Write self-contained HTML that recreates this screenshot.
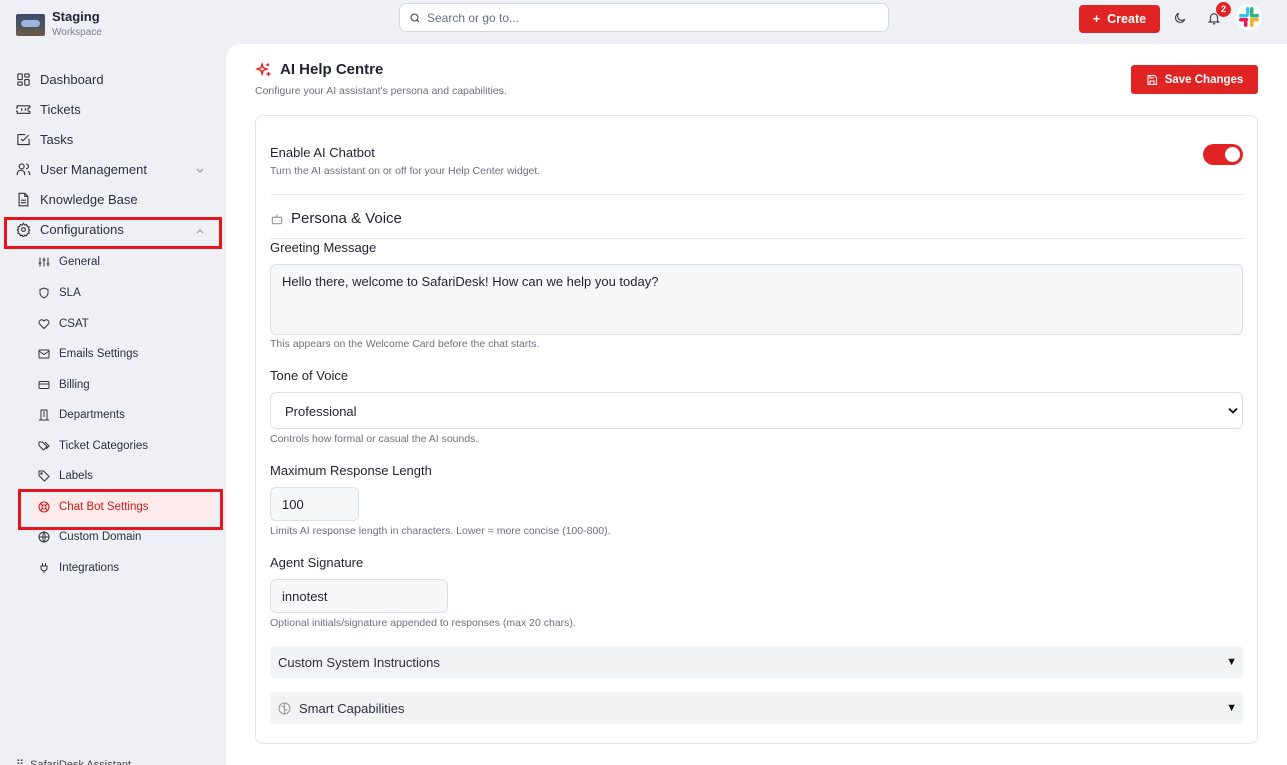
<!DOCTYPE html>
<html><head><meta charset="utf-8"><style>
*{box-sizing:border-box;margin:0;padding:0}
html,body{width:1287px;height:765px;overflow:hidden}
body{background:#eef0f6;font-family:"Liberation Sans",sans-serif;color:#1f2333;position:relative}
.abs{position:absolute}
svg{display:block}
.nav{position:absolute;left:16px;display:flex;align-items:center;font-size:13px;color:#2b3040}
.nav svg{margin-right:9px}
.sub{position:absolute;left:38px;display:flex;align-items:center;font-size:11.5px;color:#2b3040}
.sub svg{margin-right:9px}
.main{position:absolute;left:226px;top:44px;width:1061px;height:721px;background:#fff;border-top-left-radius:14px}
.card{position:absolute;left:255px;top:115px;width:1003px;height:629px;border:1px solid #e3e5ea;border-radius:8px;background:#fff}
.lbl{position:absolute;left:270px;font-size:13px;color:#1f2333}
.help{position:absolute;left:270px;font-size:10.5px;color:#6b7180}
.inp{position:absolute;left:270px;border:1px solid #dcdfe5;border-radius:6px;background:#f7f8fa;font-size:13px;color:#1f2333;padding-left:11px}
.acc{position:absolute;left:270px;width:973px;height:32px;background:#f2f3f5;border-radius:4px;font-size:13px;color:#2b3040;display:flex;align-items:center;padding-left:8px}
.acc .tri{position:absolute;right:6px;top:10px;font-size:11px;color:#111}
</style></head><body>
<div class="abs" style="left:16px;top:14px;width:29px;height:22px;background:linear-gradient(#3a4a6a,#6b5a4a);border-radius:2px"><div style="margin:6px 5px;width:19px;height:7px;background:#9bb5e0;border-radius:4px"></div></div>
<div class="abs" style="left:52px;top:9px;font-size:13px;font-weight:bold">Staging</div>
<div class="abs" style="left:52px;top:27px;font-size:10px;color:#7a7f8c">Workspace</div>
<div class="abs" style="left:399px;top:3px;width:490px;height:29px;background:#fff;border:1px solid #d5d8df;border-radius:7px;font-size:12px;color:#6b7180;padding:7px 0 0 27px">Search or go to...
<svg class="abs" style="left:9px;top:8px" width="12" height="12" viewBox="0 0 24 24" fill="none" stroke="#444" stroke-width="2.2"><circle cx="11" cy="11" r="7"/><path d="M20 20l-4-4"/></svg></div>
<div class="abs" style="left:1079px;top:5px;width:81px;height:28px;background:#e02424;border-radius:4px;color:#fff;font-size:12.5px;font-weight:bold;display:flex;align-items:center;justify-content:center">+&nbsp; Create</div>
<svg class="abs" style="left:1173px;top:11px" width="14" height="14" viewBox="0 0 24 24" fill="none" stroke="#444" stroke-width="2"><path d="M20 14A8 8 0 1 1 10 4a6 6 0 0 0 10 10z"/></svg>
<svg class="abs" style="left:1207px;top:11px" width="14" height="15" viewBox="0 0 24 24" fill="none" stroke="#444" stroke-width="2"><path d="M6 16V10a6 6 0 0 1 12 0v6l2 2H4z M10 21h4"/></svg>
<div class="abs" style="left:1216px;top:2px;width:15px;height:15px;background:#e02424;border-radius:50%;color:#fff;font-size:9px;font-weight:bold;text-align:center;line-height:15px">2</div>
<svg class="abs" style="left:1236px;top:4px" width="26" height="26" viewBox="0 0 26 26"><circle cx="13" cy="13" r="13" fill="#fff"/><rect x="10" y="3" width="3.5" height="9" rx="1.7" fill="#36c5f0"/><rect x="3" y="10" width="9" height="3.5" rx="1.7" fill="#36c5f0"/><rect x="14" y="3" width="3.5" height="9" rx="1.7" fill="#2eb67d"/><rect x="14" y="10" width="9" height="3.5" rx="1.7" fill="#2eb67d"/><rect x="3" y="14" width="9" height="3.5" rx="1.7" fill="#e01e5a"/><rect x="8" y="14" width="3.5" height="9" rx="1.7" fill="#e01e5a"/><rect x="14" y="14" width="9" height="3.5" rx="1.7" fill="#ecb22e"/><rect x="14" y="14" width="3.5" height="9" rx="1.7" fill="#ecb22e"/></svg>

<div class="nav" style="top:72px"><svg width="15" height="15" viewBox="0 0 24 24" fill="none" stroke="#333" stroke-width="1.8"><rect x="3" y="3" width="7" height="9" rx="1"/><rect x="14" y="3" width="7" height="5" rx="1"/><rect x="14" y="12" width="7" height="9" rx="1"/><rect x="3" y="16" width="7" height="5" rx="1"/></svg>Dashboard</div>
<div class="nav" style="top:102px"><svg width="15" height="15" viewBox="0 0 24 24" fill="none" stroke="#333" stroke-width="1.8"><path d="M2 9a3 3 0 0 0 0 6v3h20v-3a3 3 0 0 1 0-6V6H2z M9 10v4 M15 10v4"/></svg>Tickets</div>
<div class="nav" style="top:132px"><svg width="15" height="15" viewBox="0 0 24 24" fill="none" stroke="#333" stroke-width="1.8"><path d="M21 11v9H3V4h12 M8 11l3 3 9-9"/></svg>Tasks</div>
<div class="nav" style="top:162px"><svg width="15" height="15" viewBox="0 0 24 24" fill="none" stroke="#333" stroke-width="1.8"><circle cx="9" cy="7" r="4"/><path d="M2 21v-2a6 6 0 0 1 12 0v2 M16 3a4 4 0 0 1 0 8 M22 21v-2a5 5 0 0 0-3-4"/></svg>User Management</div>
<svg class="abs" style="left:195px;top:167px" width="10" height="8" viewBox="0 0 10 8" fill="none" stroke="#999" stroke-width="1.2"><path d="M2 2l3 3 3-3"/></svg>
<div class="nav" style="top:192px"><svg width="15" height="15" viewBox="0 0 24 24" fill="none" stroke="#333" stroke-width="1.8"><path d="M14 2H5v20h14V7z M14 2v5h5 M8 13h8 M8 17h8"/></svg>Knowledge Base</div>
<div class="abs" style="left:4px;top:217px;width:218px;height:32px;border:3px solid #e8141b"></div>
<div class="nav" style="top:222px"><svg width="15" height="15" viewBox="0 0 24 24" fill="none" stroke="#333" stroke-width="1.8"><circle cx="12" cy="12" r="3"/><path d="M12 2l2 3 3-1 1 3 3 1-1 3 2 2-2 2 1 3-3 1-1 3-3-1-2 3-2-3-3 1-1-3-3-1 1-3-2-2 2-2-1-3 3-1 1-3 3 1z"/></svg>Configurations</div>
<svg class="abs" style="left:195px;top:227px" width="10" height="8" viewBox="0 0 10 8" fill="none" stroke="#999" stroke-width="1.2"><path d="M2 6l3-3 3 3"/></svg>
<div class="sub" style="top:256px"><svg width="12" height="12" viewBox="0 0 24 24" fill="none" stroke="#333" stroke-width="2"><path d="M4 3v18 M12 3v18 M20 3v18 M1 14h6 M9 8h6 M17 16h6"/></svg>General</div>
<div class="sub" style="top:287px"><svg width="12" height="12" viewBox="0 0 24 24" fill="none" stroke="#333" stroke-width="2"><path d="M12 2l8 3v7c0 5-4 8-8 10-4-2-8-5-8-10V5z"/></svg>SLA</div>
<div class="sub" style="top:318px"><svg width="12" height="12" viewBox="0 0 24 24" fill="none" stroke="#333" stroke-width="2"><path d="M12 21l-9-9a5 5 0 0 1 9-6 5 5 0 0 1 9 6z"/></svg>CSAT</div>
<div class="sub" style="top:348px"><svg width="12" height="12" viewBox="0 0 24 24" fill="none" stroke="#333" stroke-width="2"><rect x="2" y="4" width="20" height="16" rx="2"/><path d="M2 6l10 7 10-7"/></svg>Emails Settings</div>
<div class="sub" style="top:379px"><svg width="12" height="12" viewBox="0 0 24 24" fill="none" stroke="#333" stroke-width="2"><rect x="2" y="5" width="20" height="14" rx="2"/><path d="M2 10h20"/></svg>Billing</div>
<div class="sub" style="top:409px"><svg width="12" height="12" viewBox="0 0 24 24" fill="none" stroke="#333" stroke-width="2"><path d="M6 22V2h12v20 M2 22h20 M10 6h4 M10 10h4 M10 14h4"/></svg>Departments</div>
<div class="sub" style="top:440px"><svg width="12" height="12" viewBox="0 0 24 24" fill="none" stroke="#333" stroke-width="2"><path d="M2 4v7l9 9 7-7-9-9z M14 4l8 8-6 6"/></svg>Ticket Categories</div>
<div class="sub" style="top:470px"><svg width="12" height="12" viewBox="0 0 24 24" fill="none" stroke="#333" stroke-width="2"><path d="M2 2v9l11 11 9-9L11 2z"/><circle cx="7" cy="7" r="1.5"/></svg>Labels</div>
<div class="abs" style="left:18px;top:489px;width:205px;height:41px;border:3px solid #e8141b"></div>
<div class="abs" style="left:30px;top:494px;width:185px;height:26px;background:#fdeaea;border-radius:6px"></div>
<div class="sub" style="top:501px;color:#c81e1e"><svg width="12" height="12" viewBox="0 0 24 24" fill="none" stroke="#c81e1e" stroke-width="2.2"><circle cx="12" cy="12" r="10"/><circle cx="12" cy="12" r="4"/><path d="M5 5l4 4 M15 15l4 4 M19 5l-4 4 M9 15l-4 4"/></svg>Chat Bot Settings</div>
<div class="sub" style="top:531px"><svg width="12" height="12" viewBox="0 0 24 24" fill="none" stroke="#333" stroke-width="2"><circle cx="12" cy="12" r="10"/><path d="M2 12h20 M12 2c3 3 3 17 0 20 M12 2c-3 3-3 17 0 20"/></svg>Custom Domain</div>
<div class="sub" style="top:562px"><svg width="12" height="12" viewBox="0 0 24 24" fill="none" stroke="#333" stroke-width="2"><path d="M9 2v6 M15 2v6 M6 8h12v4a6 6 0 0 1-12 0z M12 18v4"/></svg>Integrations</div>
<div class="abs" style="left:16px;top:758px;font-size:11px;color:#444">⠿&nbsp; SafariDesk Assistant</div>

<div class="main"></div>
<svg class="abs" style="left:255px;top:62px" width="17" height="17" viewBox="0 0 24 24" fill="none" stroke="#e02424" stroke-width="2"><path d="M10 3l1.5 5L17 10l-5.5 2L10 17l-1.5-5L3 10l5.5-2z M19 14v6 M16 17h6 M18 2v4 M16 4h4"/></svg>
<div class="abs" style="left:280px;top:61px;font-size:15px;font-weight:bold">AI Help Centre</div>
<div class="abs" style="left:255px;top:85px;font-size:10.5px;color:#6b7180">Configure your AI assistant's persona and capabilities.</div>
<div class="abs" style="left:1131px;top:65px;width:127px;height:29px;background:#e02424;border-radius:3px;color:#fff;font-size:11.5px;font-weight:bold;display:flex;align-items:center;justify-content:center"><svg width="12" height="12" viewBox="0 0 24 24" fill="none" stroke="#fff" stroke-width="2.2" style="margin-right:7px"><path d="M4 3h13l4 4v14H4z M8 3v5h8 M8 21v-7h8v7"/></svg>Save Changes</div>

<div class="card"></div>
<div class="abs" style="left:270px;top:145px;font-size:13px">Enable AI Chatbot</div>
<div class="abs" style="left:270px;top:165px;font-size:10.5px;color:#6b7180">Turn the AI assistant on or off for your Help Center widget.</div>
<div class="abs" style="left:1203px;top:144px;width:40px;height:21px;background:#e02424;border-radius:11px"><div style="position:absolute;right:3px;top:3px;width:15px;height:15px;background:#fff;border-radius:50%"></div></div>
<div class="abs" style="left:270px;top:194px;width:973px;height:1px;background:#e5e7eb"></div>
<svg class="abs" style="left:270px;top:212px" width="14" height="14" viewBox="0 0 24 24" fill="none" stroke="#999" stroke-width="2"><rect x="4" y="9" width="16" height="11" rx="2"/><path d="M12 4v5 M9 14v1 M15 14v1"/></svg>
<div class="abs" style="left:291px;top:210px;font-size:15px">Persona &amp; Voice</div>
<div class="abs" style="left:270px;top:238px;width:973px;height:1px;background:#e5e7eb"></div>
<div class="lbl" style="top:240px">Greeting Message</div>
<div class="inp" style="top:264px;width:973px;height:71px;padding-top:9px">Hello there, welcome to SafariDesk! How can we help you today?</div>
<div class="help" style="top:338px">This appears on the Welcome Card before the chat starts.</div>
<div class="lbl" style="top:368px">Tone of Voice</div>
<div class="inp" style="top:392px;width:973px;height:37px;background:#fff;padding:11px 0 0 14px">Professional<svg class="abs" style="right:4px;top:13px" width="10" height="9" viewBox="0 0 10 8" fill="none" stroke="#111" stroke-width="1.8"><path d="M1 2l4 4 4-4"/></svg></div>
<div class="help" style="top:433px">Controls how formal or casual the AI sounds.</div>
<div class="lbl" style="top:463px">Maximum Response Length</div>
<div class="inp" style="top:487px;width:89px;height:34px;padding-top:9px">100</div>
<div class="help" style="top:525px">Limits AI response length in characters. Lower = more concise (100-800).</div>
<div class="lbl" style="top:555px">Agent Signature</div>
<div class="inp" style="top:579px;width:178px;height:34px;padding-top:9px">innotest</div>
<div class="help" style="top:617px">Optional initials/signature appended to responses (max 20 chars).</div>
<div class="acc" style="top:646px">Custom System Instructions<span class="tri">▼</span></div>
<div class="acc" style="top:692px"><svg width="13" height="13" viewBox="0 0 24 24" fill="none" stroke="#999" stroke-width="2" style="margin-right:8px"><circle cx="12" cy="12" r="10"/><path d="M12 2v20 M7 8c2 0 3 2 5 2 M17 14c-2 0-3 2-5 2"/></svg>Smart Capabilities<span class="tri">▼</span></div>
</body></html>
